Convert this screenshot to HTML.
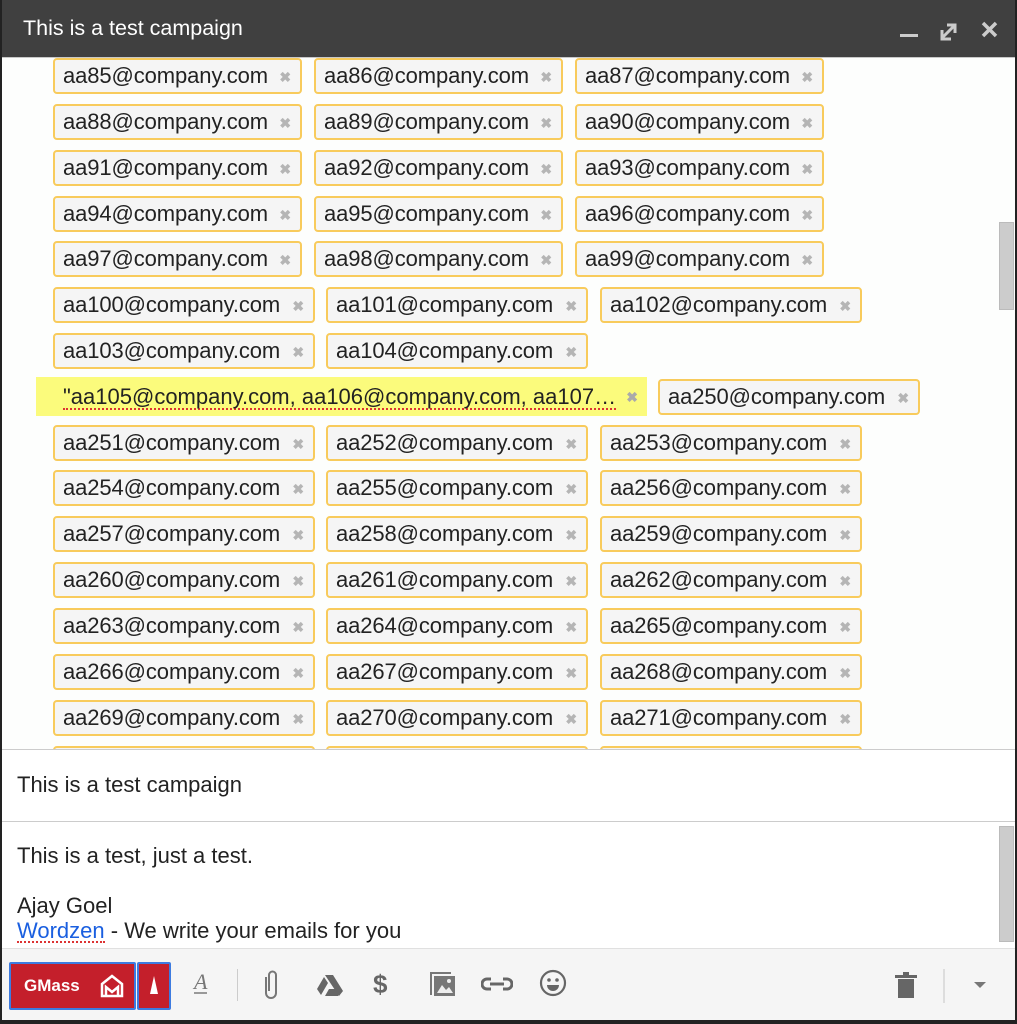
<!DOCTYPE html>
<html><head><meta charset="utf-8"><style>
*{margin:0;padding:0;box-sizing:border-box}
body{width:1017px;height:1024px;background:#222;position:relative;overflow:hidden;font-family:"Liberation Sans",Arial,sans-serif}
#win{position:absolute;left:2px;top:0;width:1013px;height:1020px;background:#fff;overflow:hidden}
#hdr{position:absolute;left:0;top:0;width:1013px;height:58px;background:#404040;border-bottom:1px solid #c8c8c8;color:#fff;font-size:21.5px}
#hdr .t{position:absolute;left:21px;top:16px}
#to{position:absolute;left:0;top:58px;width:1013px;height:691px;overflow:hidden;background:#fdfefd}
.c{position:absolute;height:36px;background:#f5f5f5;border:2px solid #f8cb5c;border-radius:4px;font-size:22px;color:#222;line-height:32px;padding-left:8px;letter-spacing:-0.1px}
.c i{position:absolute;right:9px;top:1px;font-style:normal;color:#b5b5b5;font-size:14px;font-weight:bold}
.w3{width:249px}.w4{width:262px}
#sb1{position:absolute;left:997px;top:164px;width:15px;height:88px;background:#ccc;border:1px solid #bbb}
#subj{position:absolute;left:0;top:749px;width:1013px;height:73px;border-top:1px solid #ccc;border-bottom:1px solid #ccc;font-size:22px;color:#222}
#body{position:absolute;left:0;top:822px;width:1013px;height:126px;font-size:22px;color:#222;line-height:25px}
#sb2{position:absolute;left:997px;top:4px;width:15px;height:116px;background:#ccc;border:1px solid #bbb}
#tb{position:absolute;left:0;top:948px;width:1013px;height:72px;background:#f5f5f5;border-top:1px solid #e0e0e0}
.ic{position:absolute;top:0}
</style></head><body><div id="win">
<div id="hdr"><span class="t">This is a test campaign</span>
<svg class="ic" style="left:890px;top:20px" width="110" height="24"><rect x="8" y="14" width="18" height="3" fill="#ccc"/><path d="M50 18 L62 6 M55 5 H63 V13 M50 10 V19 H59" stroke="#ccc" stroke-width="3" fill="none"/><path d="M91 3 L104 16 M104 3 L91 16" stroke="#ccc" stroke-width="3.5"/></svg>
</div>
<div id="to">
<div class="c w3" style="left:51px;top:0px">aa85@company.com<i>✖</i></div><div class="c w3" style="left:312px;top:0px">aa86@company.com<i>✖</i></div><div class="c w3" style="left:573px;top:0px">aa87@company.com<i>✖</i></div>
<div class="c w3" style="left:51px;top:46px">aa88@company.com<i>✖</i></div><div class="c w3" style="left:312px;top:46px">aa89@company.com<i>✖</i></div><div class="c w3" style="left:573px;top:46px">aa90@company.com<i>✖</i></div>
<div class="c w3" style="left:51px;top:92px">aa91@company.com<i>✖</i></div><div class="c w3" style="left:312px;top:92px">aa92@company.com<i>✖</i></div><div class="c w3" style="left:573px;top:92px">aa93@company.com<i>✖</i></div>
<div class="c w3" style="left:51px;top:138px">aa94@company.com<i>✖</i></div><div class="c w3" style="left:312px;top:138px">aa95@company.com<i>✖</i></div><div class="c w3" style="left:573px;top:138px">aa96@company.com<i>✖</i></div>
<div class="c w3" style="left:51px;top:183px">aa97@company.com<i>✖</i></div><div class="c w3" style="left:312px;top:183px">aa98@company.com<i>✖</i></div><div class="c w3" style="left:573px;top:183px">aa99@company.com<i>✖</i></div>
<div class="c w4" style="left:51px;top:229px">aa100@company.com<i>✖</i></div><div class="c w4" style="left:324px;top:229px">aa101@company.com<i>✖</i></div><div class="c w4" style="left:598px;top:229px">aa102@company.com<i>✖</i></div>
<div class="c w4" style="left:51px;top:275px">aa103@company.com<i>✖</i></div><div class="c w4" style="left:324px;top:275px">aa104@company.com<i>✖</i></div>
<div style="position:absolute;left:34px;top:319px;width:611px;height:39px;background:#fbfb7c;font-size:22px;color:#222;line-height:39px;padding-left:27px"><span style="border-bottom:2px dotted #d33;line-height:22px;display:inline-block">"aa105@company.com, aa106@company.com, aa107…</span><span style="position:absolute;right:9px;top:1px;color:#aaa;font-size:14px;font-weight:bold">✖</span></div>
<div class="c w4" style="left:656px;top:321px">aa250@company.com<i>✖</i></div>
<div class="c w4" style="left:51px;top:367px">aa251@company.com<i>✖</i></div><div class="c w4" style="left:324px;top:367px">aa252@company.com<i>✖</i></div><div class="c w4" style="left:598px;top:367px">aa253@company.com<i>✖</i></div>
<div class="c w4" style="left:51px;top:412px">aa254@company.com<i>✖</i></div><div class="c w4" style="left:324px;top:412px">aa255@company.com<i>✖</i></div><div class="c w4" style="left:598px;top:412px">aa256@company.com<i>✖</i></div>
<div class="c w4" style="left:51px;top:458px">aa257@company.com<i>✖</i></div><div class="c w4" style="left:324px;top:458px">aa258@company.com<i>✖</i></div><div class="c w4" style="left:598px;top:458px">aa259@company.com<i>✖</i></div>
<div class="c w4" style="left:51px;top:504px">aa260@company.com<i>✖</i></div><div class="c w4" style="left:324px;top:504px">aa261@company.com<i>✖</i></div><div class="c w4" style="left:598px;top:504px">aa262@company.com<i>✖</i></div>
<div class="c w4" style="left:51px;top:550px">aa263@company.com<i>✖</i></div><div class="c w4" style="left:324px;top:550px">aa264@company.com<i>✖</i></div><div class="c w4" style="left:598px;top:550px">aa265@company.com<i>✖</i></div>
<div class="c w4" style="left:51px;top:596px">aa266@company.com<i>✖</i></div><div class="c w4" style="left:324px;top:596px">aa267@company.com<i>✖</i></div><div class="c w4" style="left:598px;top:596px">aa268@company.com<i>✖</i></div>
<div class="c w4" style="left:51px;top:642px">aa269@company.com<i>✖</i></div><div class="c w4" style="left:324px;top:642px">aa270@company.com<i>✖</i></div><div class="c w4" style="left:598px;top:642px">aa271@company.com<i>✖</i></div>
<div class="c w4" style="left:51px;top:688px">aa272@company.com<i>✖</i></div><div class="c w4" style="left:324px;top:688px">aa273@company.com<i>✖</i></div><div class="c w4" style="left:598px;top:688px">aa274@company.com<i>✖</i></div>
<div id="sb1"></div>
</div>
<div id="subj"><span style="position:absolute;left:15px;top:22px">This is a test campaign</span></div>
<div id="body"><div style="position:absolute;left:15px;top:21px">This is a test, just a test.<br><br>Ajay Goel<br><span style="color:#1a5fe0;border-bottom:2px dotted #d33;line-height:21px;display:inline-block">Wordzen</span> - We write your emails for you</div><div id="sb2"></div></div>
<div id="tb">
<div style="position:absolute;left:7px;top:13px;width:127px;height:48px;background:#c41f2b;border:2px solid #3d7be0;border-radius:2px;color:#fff;font-weight:bold;font-size:17px;line-height:44px;padding-left:13px">GMass
<svg style="position:absolute;left:88px;top:9px" width="26" height="26" viewBox="0 0 26 26"><path d="M3 11 L13 3 L23 11 V23 H3 Z M7 23 V14 L13 19 L19 14 V23" stroke="#fff" stroke-width="2.5" fill="none"/></svg></div>
<div style="position:absolute;left:135px;top:13px;width:34px;height:48px;background:#c41f2b;border:2px solid #3d7be0;border-radius:2px"><svg width="30" height="44"><path d="M11 30 L15 12 L19 30 Z" fill="#fff"/></svg></div>
<span style="position:absolute;left:192px;top:23px;font-family:'Liberation Serif',serif;font-style:italic;font-size:22px;color:#777;border-bottom:2px solid #999;line-height:20px">A</span>
<div style="position:absolute;left:235px;top:20px;width:1px;height:32px;background:#ccc"></div>
<svg class="ic" style="left:258px;top:20px" width="20" height="34"><path d="M6 8 V24 a5 5 0 0 0 10 0 V6 a3.5 3.5 0 0 0 -7 0 V22" stroke="#777" stroke-width="2" fill="none"/></svg>
<svg class="ic" style="left:314px;top:24px" width="28" height="24"><path d="M9 2 H17 L27 18 L23 23 Z M8 4 L12 10 L5 22 L1 16 Z M13 16 H26 L22 23 H9 Z" fill="#666"/></svg>
<span style="position:absolute;left:371px;top:20px;font-size:26px;font-weight:bold;color:#666">$</span>
<svg class="ic" style="left:427px;top:20px" width="28" height="28"><path d="M1 3 H22 V5 H3 V26 H1 Z" fill="#777"/><rect x="5" y="7" width="21" height="20" fill="#777"/><path d="M8 24 L13 16 L17 21 L20 18 L24 24 Z" fill="#eee"/><circle cx="20" cy="12" r="2" fill="#eee"/></svg>
<svg class="ic" style="left:479px;top:26px" width="32" height="18"><path d="M10 4 H6 a5 5 0 0 0 0 10 H10 M22 4 H26 a5 5 0 0 1 0 10 H22 M9 9 H23" stroke="#666" stroke-width="3" fill="none"/></svg>
<svg class="ic" style="left:537px;top:20px" width="28" height="28"><circle cx="14" cy="14" r="12" stroke="#666" stroke-width="2.2" fill="none"/><circle cx="10" cy="11" r="1.8" fill="#666"/><circle cx="18" cy="11" r="1.8" fill="#666"/><path d="M8 16 H20 A6 6 0 0 1 8 16 Z" fill="#666"/></svg>
<svg class="ic" style="left:893px;top:23px" width="24" height="28"><rect x="0" y="3" width="22" height="3" fill="#666"/><rect x="8" y="0" width="6" height="3" fill="#666"/><rect x="3" y="7" width="16" height="19" fill="#666"/></svg>
<div style="position:absolute;left:941px;top:20px;width:2px;height:34px;background:#ddd"></div>
<svg class="ic" style="left:972px;top:33px" width="14" height="8"><path d="M0 0 H12 L6 6 Z" fill="#777"/></svg>
</div>
</div></body></html>
